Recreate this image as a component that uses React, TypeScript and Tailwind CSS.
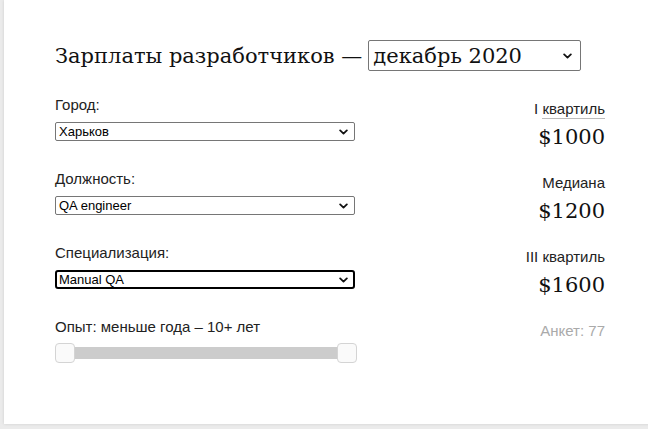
import React from 'react';

const sans = { fontFamily: '"Liberation Sans", Arial, sans-serif' };
const serif = { fontFamily: '"DejaVu Serif", Georgia, serif' };

function Chevron({ className = '' }: { className?: string }) {
  return (
    <svg viewBox="0 0 10 6" className={className} fill="none">
      <path d="M1.3 1.2 L5 4.7 L8.7 1.2" stroke="#111" strokeWidth="2" strokeLinecap="round" strokeLinejoin="round" />
    </svg>
  );
}

function Field({ label, value, focused }: { label: string; value: string; focused?: boolean }) {
  return (
    <div className="h-[74px]">
      <div className="text-[15px] leading-[17px] text-[#222]">{label}</div>
      <div
        className={
          focused
            ? 'mt-[9px] h-[19px] w-[300px] rounded-[3px] border-2 border-black bg-white flex items-center justify-between pl-[2px] pr-[5px]'
            : 'mt-[9px] h-[19px] w-[300px] rounded-[2px] border border-[#767676] bg-white flex items-center justify-between pl-[3px] pr-[6px]'
        }
      >
        <span className="text-[13px] leading-[15px] text-black">{value}</span>
        <Chevron className="w-[9px] h-[6px]" />
      </div>
    </div>
  );
}

function Stat({ label, value }: { label: React.ReactNode; value: string }) {
  return (
    <div className="h-[74px] flex flex-col items-end">
      <div className="text-[15px] leading-[17px] text-[#222]">{label}</div>
      <div className="mt-[8px] text-[21px] leading-[24px] text-[#111]" style={serif}>
        {value}
      </div>
    </div>
  );
}

export default function App() {
  return (
    <div className="w-[648px] h-[429px] bg-[#ebebeb] overflow-hidden" style={sans}>
      <div className="ml-[4px] w-[680px] h-[424px] bg-white shadow-[0_0_3px_rgba(0,0,0,0.12)] pl-[51px] pt-[40px]">
        {/* Title */}
        <div className="flex items-center h-[31px]">
          <h1 className="text-[21px] leading-[28px] text-[#111] font-normal" style={serif}>
            Зарплаты разработчиков —
          </h1>
          <div className="ml-[6px] w-[213px] h-[31px] rounded-[2px] border border-[#767676] flex items-center justify-between pl-[4px] pr-[8px]">
            <span className="text-[21px] leading-[28px] text-[#111]" style={serif}>
              декабрь 2020
            </span>
            <Chevron className="w-[9px] h-[6px]" />
          </div>
        </div>

        <div className="flex mt-[25px] w-[550px] justify-between">
          {/* Filters */}
          <div className="w-[302px]">
            <Field label="Город:" value="Харьков" />
            <Field label="Должность:" value="QA engineer" />
            <Field label="Специализация:" value="Manual QA" focused />
            <div>
              <div className="text-[15px] leading-[17px] text-[#222]">Опыт: меньше года – 10+ лет</div>
              <div className="relative mt-[8px] h-[20px] w-[302px]">
                <div className="absolute left-[2px] right-[2px] top-[4px] h-[12px] bg-[#cccccc]" />
                <div className="absolute left-0 top-0 w-[20px] h-[20px] rounded-[4px] bg-[#fafafa] border border-[#d4d4d4]" />
                <div className="absolute right-0 top-0 w-[20px] h-[20px] rounded-[4px] bg-[#fafafa] border border-[#d4d4d4]" />
              </div>
            </div>
          </div>

          {/* Stats */}
          <div className="pt-[4px] flex flex-col items-end">
            <Stat
              label={
                <span>
                  I <span className="border-b border-[#bbbbbb] pb-[1px]">квартиль</span>
                </span>
              }
              value="$1000"
            />
            <Stat label="Медиана" value="$1200" />
            <Stat label="III квартиль" value="$1600" />
            <div className="text-[15px] leading-[17px] text-[#aaaaaa]">Анкет: 77</div>
          </div>
        </div>
      </div>
    </div>
  );
}
